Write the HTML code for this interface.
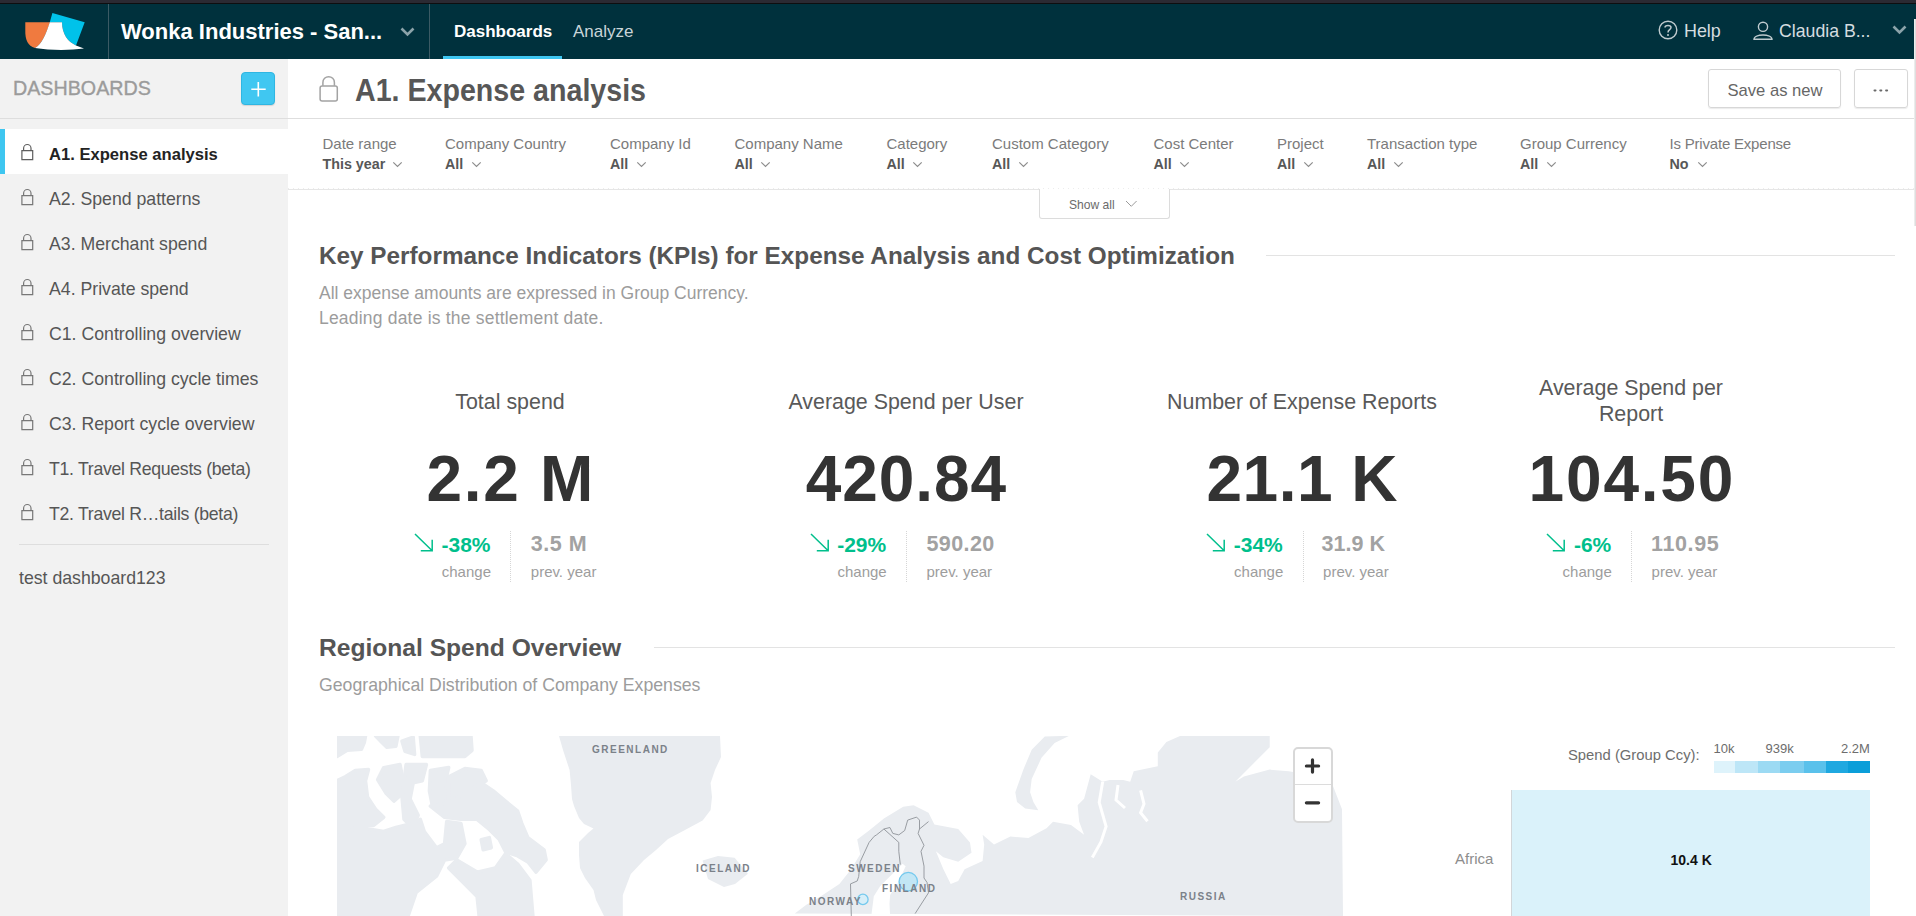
<!DOCTYPE html>
<html><head><meta charset="utf-8">
<style>
*{box-sizing:border-box;margin:0;padding:0}
html,body{width:1916px;height:916px;overflow:hidden;background:#fff;font-family:"Liberation Sans",sans-serif}
.a{position:absolute;white-space:nowrap;line-height:normal}
svg{position:absolute;overflow:visible}
#topstrip{position:absolute;left:0;top:0;width:1916px;height:3px;background:#2b2a33}
#topline{position:absolute;left:0;top:3px;width:1916px;height:1px;background:#0e0e10}
#hdr{position:absolute;left:0;top:4px;width:1916px;height:55px;background:#00313d}
.vdiv{position:absolute;top:4px;width:1px;height:55px;background:#3b5a64}
#sb{position:absolute;left:0;top:59px;width:288px;height:857px;background:#f2f2f2}
.hl{position:absolute;height:1px;background:#dedede}
.item{position:absolute;left:0;width:288px;height:45px}
.item .t{position:absolute;left:49px;top:14.8px;font-size:17.7px;color:#565656;white-space:nowrap}
.flt{position:absolute;top:135.4px}
.flt .l{font-size:15px;color:#7b7b7b;white-space:nowrap;line-height:17px;height:20.5px}
.flt .v{font-size:14.3px;font-weight:bold;color:#575757;white-space:nowrap;line-height:17px}
.kl{position:absolute;font-size:21.4px;color:#595959;white-space:nowrap;text-align:center}
.kn{position:absolute;font-size:64px;font-weight:bold;color:#333;white-space:nowrap;text-align:center;top:442px}
.kc{position:absolute;font-size:21px;font-weight:bold;color:#00bf8c;white-space:nowrap;top:532.7px;text-align:right}
.kp{position:absolute;font-size:21.5px;font-weight:bold;color:#a2a2a2;white-space:nowrap;top:531.6px}
.ks{position:absolute;font-size:15px;color:#9d9d9d;white-space:nowrap;top:563px}
.kd{position:absolute;top:531px;width:0;height:51px;border-left:1px dotted #d6d6d6}
.ml{position:absolute;font-size:10px;font-weight:bold;color:#7b8189;letter-spacing:1.5px;white-space:nowrap}
</style></head><body>
<div id="topstrip"></div><div id="topline"></div>
<div id="hdr"></div>
<!-- logo -->
<svg style="left:0;top:0" width="110" height="59" viewBox="0 0 110 59">
<path d="M52.4,13.1 L84.7,22.3 L76,45.4 C68,42 62,34 62,22.3 L49.8,22.3 Z" fill="#00c2ea"/>
<path d="M25.3,22.3 L50,22.3 C46,34 42,44 35,48 C28,46 25,40 25.3,30 Z" fill="#f07a3f"/>
<path d="M49.8,22.3 L62,22.3 C62,34 68,42 76,45.4 L84,48.5 C70,50.5 50,50.5 35,48 C42,44 46,34 49.8,22.3 Z" fill="#fff"/>
</svg>
<div class="vdiv" style="left:108px"></div>
<div class="vdiv" style="left:429px"></div>
<div class="a" style="left:121px;top:19.1px;font-size:22px;font-weight:bold;color:#fff">Wonka Industries - San...</div>
<svg style="left:400px;top:27px" width="16" height="10"><path d="M1.5,1.5 L7.5,7.5 L13.5,1.5" fill="none" stroke="#8ba3aa" stroke-width="2.6"/></svg>
<div class="a" style="left:454px;top:22.4px;font-size:17px;font-weight:bold;color:#fff">Dashboards</div>
<div class="a" style="left:443px;top:56px;width:119px;height:3px;background:#3ec6f1"></div>
<div class="a" style="left:573px;top:22.4px;font-size:17px;color:#c9d5d9">Analyze</div>
<svg style="left:1658px;top:20px" width="20" height="20"><circle cx="10" cy="10" r="8.8" fill="none" stroke="#bfcbcf" stroke-width="1.4"/><path d="M7,7.6 C7,4.8 13,4.8 13,7.6 C13,9.6 10,9.8 10,12.4" fill="none" stroke="#bfcbcf" stroke-width="1.5"/><circle cx="10" cy="15" r="1" fill="#bfcbcf"/></svg>
<div class="a" style="left:1684px;top:20.8px;font-size:17.9px;color:#d5dde0">Help</div>
<svg style="left:1753px;top:21px" width="20" height="20"><circle cx="10" cy="5.8" r="4.6" fill="none" stroke="#bfcbcf" stroke-width="1.4"/><path d="M1,18.3 C1,12.5 19,12.5 19,18.3 Z" fill="none" stroke="#bfcbcf" stroke-width="1.4"/></svg>
<div class="a" style="left:1779px;top:20.8px;font-size:17.7px;color:#d5dde0">Claudia B...</div>
<svg style="left:1892px;top:25px" width="16" height="10"><path d="M1.5,1.5 L7.5,7.5 L13.5,1.5" fill="none" stroke="#8ba3aa" stroke-width="2.6"/></svg>
<div class="a" style="left:1914px;top:19px;width:2px;height:40px;background:#fff"></div><div class="a" style="left:1914px;top:19px;width:2px;height:207px;background:linear-gradient(90deg,#ececec 50%,#dedede 50%)"></div>

<!-- sidebar -->
<div id="sb"></div>
<div class="a" style="left:13px;top:77.2px;font-size:19.7px;color:#9b9b9b;-webkit-text-stroke:0.35px #9b9b9b">DASHBOARDS</div>
<div class="a" style="left:241px;top:72px;width:34px;height:33px;background:#40c7f1;border:1px solid #2fb6e2;border-radius:4px;box-shadow:0 1px 1px rgba(0,0,0,.12)"></div>
<svg style="left:241px;top:72px" width="34" height="33"><path d="M10.3,17.3 H24.7 M17.3,10 V24.5" stroke="#fff" stroke-width="1.6"/></svg>
<div class="hl" style="left:0;top:118px;width:1914px"></div>

<div class="item" style="top:129px;background:#fff"><div style="position:absolute;left:0;top:0;width:5px;height:45px;background:#3ec6f0"></div><div class="t" style="font-weight:bold;color:#232323;font-size:16.6px;top:16px">A1. Expense analysis</div></div>
<div class="item" style="top:174px"><div class="t">A2. Spend patterns</div></div>
<div class="item" style="top:219px"><div class="t">A3. Merchant spend</div></div>
<div class="item" style="top:264px"><div class="t">A4. Private spend</div></div>
<div class="item" style="top:309px"><div class="t">C1. Controlling overview</div></div>
<div class="item" style="top:354px"><div class="t">C2. Controlling cycle times</div></div>
<div class="item" style="top:399px"><div class="t">C3. Report cycle overview</div></div>
<div class="item" style="top:444px"><div class="t" style="letter-spacing:-0.3px">T1. Travel Requests (beta)</div></div>
<div class="item" style="top:489px"><div class="t" style="letter-spacing:-0.3px">T2. Travel R…tails (beta)</div></div>
<svg style="left:0;top:129px" width="40" height="405">
<g fill="none" stroke="#5e5e5e" stroke-width="1.2">
<path id="lk" d="M23.6,21.6 V19.2 A3.7,3.7 0 0 1 31,19.2 V21.6 M21.9,21.6 H32.7 V30.6 H21.9 Z"/>
<use href="#lk" y="45" stroke="#777"/><use href="#lk" y="90" stroke="#777"/><use href="#lk" y="135" stroke="#777"/><use href="#lk" y="180" stroke="#777"/><use href="#lk" y="225" stroke="#777"/><use href="#lk" y="270" stroke="#777"/><use href="#lk" y="315" stroke="#777"/><use href="#lk" y="360" stroke="#777"/>
</g></svg>
<div class="hl" style="left:19px;top:544px;width:250px"></div>
<div class="a" style="left:19px;top:568px;font-size:17.7px;color:#565656">test dashboard123</div>

<!-- title bar -->
<svg style="left:318px;top:75px" width="22" height="28"><g fill="none" stroke="#a3a3a3" stroke-width="1.5"><path d="M4.9,10.8 V7.4 A5.75,5.75 0 0 1 16.4,7.4 V10.8"/><rect x="2.1" y="10.9" width="17.2" height="15.2" rx="2"/></g></svg>
<div class="a" style="left:355px;top:72.7px;font-size:30.5px;font-weight:bold;color:#575757;transform:scaleX(0.938);transform-origin:0 0">A1. Expense analysis</div>
<div class="a" style="left:1708px;top:69px;width:133px;height:39px;border:1px solid #d7d7d7;border-radius:3px;box-shadow:0 1px 1px rgba(0,0,0,.08)"></div>
<div class="a" style="left:1727.5px;top:80.5px;font-size:16.6px;color:#666">Save as new</div>
<div class="a" style="left:1854px;top:69px;width:54px;height:39px;border:1px solid #d7d7d7;border-radius:3px;box-shadow:0 1px 1px rgba(0,0,0,.08)"></div>
<svg style="left:1873px;top:89px" width="16" height="4"><rect x="0.5" y="0.4" width="3" height="2" rx="0.8" fill="#6a6a6a"/><rect x="6.3" y="0.4" width="3" height="2" rx="0.8" fill="#6a6a6a"/><rect x="12.1" y="0.4" width="3" height="2" rx="0.8" fill="#6a6a6a"/></svg>


<!-- filters -->
<div class="hl" style="left:288px;top:189px;width:1626px;background:#e6e6e6"></div><div class="a" style="left:288px;top:188px;width:1626px;height:1px;background:repeating-linear-gradient(90deg,#ececec 0 1px,transparent 1px 5px)"></div>
<div class="flt" style="left:322.5px"><div class="l">Date range</div><div class="v">This year</div></div>
<div class="flt" style="left:445px"><div class="l">Company Country</div><div class="v">All</div></div>
<div class="flt" style="left:610px"><div class="l">Company Id</div><div class="v">All</div></div>
<div class="flt" style="left:734.5px"><div class="l">Company Name</div><div class="v">All</div></div>
<div class="flt" style="left:886.5px"><div class="l">Category</div><div class="v">All</div></div>
<div class="flt" style="left:992px"><div class="l">Custom Category</div><div class="v">All</div></div>
<div class="flt" style="left:1153.5px"><div class="l">Cost Center</div><div class="v">All</div></div>
<div class="flt" style="left:1277px"><div class="l">Project</div><div class="v">All</div></div>
<div class="flt" style="left:1367px"><div class="l">Transaction type</div><div class="v">All</div></div>
<div class="flt" style="left:1520px"><div class="l">Group Currency</div><div class="v">All</div></div>
<div class="flt" style="left:1669.5px"><div class="l" style="letter-spacing:-0.2px">Is Private Expense</div><div class="v">No</div></div>
<svg style="left:0;top:160px" width="1916" height="10"><g fill="none" stroke="#8d8d8d" stroke-width="1.2">
<path id="ch" d="M393.3,2.3 L397.5,6.5 L401.7,2.3"/>
<use href="#ch" x="79"/><use href="#ch" x="244"/><use href="#ch" x="368"/><use href="#ch" x="520"/><use href="#ch" x="626"/><use href="#ch" x="787"/><use href="#ch" x="911"/><use href="#ch" x="1001"/><use href="#ch" x="1154"/><use href="#ch" x="1305"/>
</g></svg>
<div class="a" style="left:1038.5px;top:189px;width:131px;height:30px;background:#fff;border:1px solid #dcdcdc;border-top:none;border-radius:0 0 3px 3px"></div>
<div class="a" style="left:1069px;top:197.7px;font-size:12.1px;color:#6b6b6b">Show all</div>
<svg style="left:1125px;top:200px" width="14" height="8"><path d="M1,1 L6.3,6.3 L11.6,1" fill="none" stroke="#9a9a9a" stroke-width="1"/></svg>

<!-- KPI section -->
<div class="a" style="left:319px;top:242px;font-size:24.3px;font-weight:bold;color:#555">Key Performance Indicators (KPIs) for Expense Analysis and Cost Optimization</div>
<div class="hl" style="left:1266px;top:255px;width:629px;background:#e3e3e3"></div>
<div class="a" style="left:319px;top:283.2px;font-size:17.5px;color:#9c9c9c">All expense amounts are expressed in Group Currency.</div>
<div class="a" style="left:319px;top:308.2px;font-size:17.5px;color:#9c9c9c;letter-spacing:0.2px">Leading date is the settlement date.</div>

<div class="kl" style="left:310px;width:400px;top:389.6px">Total spend</div>
<div class="kn" style="left:310px;width:400px;letter-spacing:1.7px;text-indent:1.7px">2.2 M</div>
<div class="kl" style="left:706px;width:400px;top:389.6px">Average Spend per User</div>
<div class="kn" style="left:706px;width:400px;letter-spacing:0.9px;text-indent:0.9px">420.84</div>
<div class="kl" style="left:1102px;width:400px;top:389.6px">Number of Expense Reports</div>
<div class="kn" style="left:1102px;width:400px;letter-spacing:0.5px;text-indent:0.5px">21.1 K</div>
<div class="kl" style="left:1431px;width:400px;top:375.6px">Average Spend per</div>
<div class="kl" style="left:1431px;width:400px;top:401.8px">Report</div>
<div class="kn" style="left:1431px;width:400px;letter-spacing:1.8px;text-indent:1.8px">104.50</div>
<div class="kd" style="left:510px"></div>
<div class="kc" style="left:190.5px;width:300px"><svg style="position:relative;display:inline-block;vertical-align:-0.5px;margin-right:7.5px" width="20" height="19"><path d="M1,1 L18.2,17.8 M6.8,17.8 H18.2 V6.8" fill="none" stroke="#00bf8c" stroke-width="1.5"/></svg>-38%</div>
<div class="ks" style="left:190.5px;width:300.5px;text-align:right">change</div>
<div class="kp" style="left:530.8px;letter-spacing:0.5px">3.5 M</div>
<div class="ks" style="left:530.8px">prev. year</div>
<div class="kd" style="left:906.2px"></div>
<div class="kc" style="left:586.2px;width:300px"><svg style="position:relative;display:inline-block;vertical-align:-0.5px;margin-right:7.5px" width="20" height="19"><path d="M1,1 L18.2,17.8 M6.8,17.8 H18.2 V6.8" fill="none" stroke="#00bf8c" stroke-width="1.5"/></svg>-29%</div>
<div class="ks" style="left:586.2px;width:300.5px;text-align:right">change</div>
<div class="kp" style="left:926.5px;letter-spacing:0.4px">590.20</div>
<div class="ks" style="left:926.5px">prev. year</div>
<div class="kd" style="left:1302.8px"></div>
<div class="kc" style="left:982.8px;width:300px"><svg style="position:relative;display:inline-block;vertical-align:-0.5px;margin-right:7.5px" width="20" height="19"><path d="M1,1 L18.2,17.8 M6.8,17.8 H18.2 V6.8" fill="none" stroke="#00bf8c" stroke-width="1.5"/></svg>-34%</div>
<div class="ks" style="left:982.8px;width:300.5px;text-align:right">change</div>
<div class="kp" style="left:1321.6px">31.9 K</div>
<div class="ks" style="left:1323.1px">prev. year</div>
<div class="kd" style="left:1631.3px"></div>
<div class="kc" style="left:1311.3px;width:300px"><svg style="position:relative;display:inline-block;vertical-align:-0.5px;margin-right:7.5px" width="20" height="19"><path d="M1,1 L18.2,17.8 M6.8,17.8 H18.2 V6.8" fill="none" stroke="#00bf8c" stroke-width="1.5"/></svg>-6%</div>
<div class="ks" style="left:1311.3px;width:300.5px;text-align:right">change</div>
<div class="kp" style="left:1651.1px;letter-spacing:0.6px">110.95</div>
<div class="ks" style="left:1651.6px">prev. year</div>

<!-- Regional section -->
<div class="a" style="left:319px;top:633.7px;font-size:24.6px;font-weight:bold;color:#555">Regional Spend Overview</div>
<div class="hl" style="left:654px;top:647px;width:1241px;background:#e3e3e3"></div>
<div class="a" style="left:319px;top:674.8px;font-size:17.7px;color:#9c9c9c">Geographical Distribution of Company Expenses</div>

<div class="a" style="left:337px;top:736px;width:1006px;height:180px;overflow:hidden;background:#fff">
<svg style="left:-337px;top:-736px" width="1916" height="916">
<g fill="#e9ecf0" stroke="#e9ecf0" stroke-width="3.5" stroke-linejoin="round">
<polygon points="337.0,736.1 365.5,736.1 364.4,742.2 361.4,749.3 347.2,750.3 337.0,756.4"/>
<polygon points="375.6,736.1 397.9,736.1 395.9,746.2 386.8,747.3 381.7,742.2"/>
<polygon points="402.0,741.2 413.2,737.1 414.6,754.4 405.0,751.3"/>
<polygon points="420.3,736.1 471.0,736.1 472.0,750.3 464.9,756.4 422.3,756.4"/>
<polygon points="337.0,780.8 345.2,776.7 355.3,770.6 368.5,769.6 365.5,780.8 367.5,797.0 375.6,809.2 383.7,817.3 373.6,825.4 359.4,825.4 349.2,831.5 337.0,833.5"/>
<polygon points="377.6,779.7 383.7,767.6 400.0,764.5 402.0,774.7 401.0,795.0 393.9,801.1 385.8,792.9"/>
<polygon points="406.1,764.5 426.4,764.5 422.3,780.8 413.2,782.8 410.1,799.0 418.2,815.3 412.1,827.4 404.0,819.3 402.0,797.0"/>
<polygon points="430.4,770.6 448.7,767.6 445.6,780.8 446.7,801.1 440.6,808.2 432.4,806.1 429.4,790.9"/>
<polygon points="448.7,776.7 464.9,768.6 481.2,770.6 486.2,780.8 469.0,790.9 456.8,797.0 448.7,801.1"/>
<polygon points="430.4,806.1 448.7,803.1 469.0,790.9 481.2,782.8 493.3,790.9 505.5,801.1 517.7,811.2 521.8,823.4 527.9,837.6 544.1,849.8 546.1,859.9 536.0,872.1 527.9,862.0 517.7,855.9 505.5,851.8 499.4,839.6 489.3,829.5 477.1,819.3 460.9,819.3 444.6,817.3"/>
<polygon points="337.0,835.6 359.4,827.4 383.7,831.5 395.9,827.4 412.1,823.4 420.3,819.3 424.3,831.5 436.5,847.7 444.6,843.7 446.7,821.4 460.9,823.4 464.9,843.7 456.8,857.9 444.6,859.9 436.5,876.2 416.2,892.4 408.1,916.0 337.0,916.0"/>
<polygon points="477.1,872.1 495.4,868.0 505.5,853.8 517.7,864.0 529.9,880.2 532.9,916.0 479.1,916.0 477.1,896.5 464.9,884.3 448.7,868.0 456.8,859.9"/>
<polygon points="481.2,839.6 489.3,837.6 491.3,847.7 483.2,849.8"/>
</g>
<g fill="#e9ecf0">
<polygon points="559,736 720,736 721,757 715,770 710.6,783 712,797 710.6,810 702.6,820.5 685,830 668,839 656,850 644,860 630.8,874 622.8,895 622.8,916 604,916 596,900 593.5,890 585,878 580,868 579,855 579,842 588,833 593.5,828.5 584,824 579,818 574,806 572,799 571,785 569.6,770 563,750"/>
<polygon points="702.6,860.4 718,856 734.6,857.8 747.9,873.7 735,884 724,887 708,879"/>
<polygon points="794.8,913.6 806,905 821.6,895.8 839.4,883.9 851.3,869.1 860.2,854.2 857.2,839.4 869.1,830.5 883.9,818.6 903.2,806.7 913.6,805.2 928.5,812.7 934.4,824.5 958.2,829 970,842.4 971.5,852.7 958.2,861.7 943.3,857.2 935.9,851.3 943.3,869.1 950.7,883.9 958.2,881 964.6,869.2 982.6,861 984.2,844.6 982.6,834.8 994,844.6 1010.4,836.5 1028.4,838.1 1046.5,828.3 1053,821.7 1071,825 1084.1,834.8 1079.2,821.7 1077.6,805.3 1084.1,798.8 1090.7,774.2 1102.7,781.7 1109.6,780 1123.3,780 1130.2,781.7 1133.7,771.3 1157.8,766.2 1157.8,752.4 1166.4,742 1180,736 1269.7,736 1269.7,747.2 1235.3,781.7 1243.9,776.5 1269.7,769.6 1288.7,771.3 1330,778.2 1342,809.2 1343,916"/>
<polygon points="1069.4,735.7 1044.8,736.6 1031.7,749.7 1023.5,769.3 1015.3,792.2 1017,802.1 1025.2,808.6 1038.3,810.2 1033.4,802.1 1030.1,792.2 1031.7,779.1 1041.5,757.8 1054.6,743.1"/>
</g>
<polygon fill="#fff" points="871.3,916 873.8,896.3 880.1,886.3 888.8,877.5 900.1,866.3 902.6,863.8 905.7,866.3 898.9,880.7 896.4,886.3 890.1,895.1 889.5,903.8 890.1,916"/>
<g fill="none" stroke="#fff" stroke-width="3"><polyline points="1102.7,781.7 1099.2,802.3 1106.1,826.5 1101,842 1092.3,857.5"/><polyline points="1140.6,790.3 1144,804 1140.6,812.7 1147.5,821.3"/><polyline points="1118,785 1116,800 1125,808"/></g>
<g fill="none" stroke="#8f9399" stroke-width="0.9">
<polyline points="851.3,916 850.5,883.9 857.2,881 858.7,876.5 860.2,861.7 869.1,842.4 874.2,836.3 876.5,834.9 883.9,829 889.9,827.5 892.8,833.4 898.8,834.9 904.7,830.5 907.7,820.1 916.6,817.1 919.5,820.1 919.5,829 928.5,821.6"/>
<polyline points="919.5,829 918.1,833.4 924,845.3 921,851.3 924,866.1 924,878 927,882.4 928.5,892.8 915.1,913.6"/>
<polyline points="883.9,829 898.8,842.4 898.8,851.3 900.3,864.6"/>
</g>
<circle cx="908.3" cy="881.6" r="9.2" fill="#c2e6f5" stroke="#74c9ee" stroke-width="1.3"/>
<circle cx="862.9" cy="899.4" r="5.2" fill="#d6eef8" stroke="#74c9ee" stroke-width="1.3"/>
</svg>
<div class="ml" style="left:255px;top:8px">GREENLAND</div>
<div class="ml" style="left:359px;top:127px">ICELAND</div>
<div class="ml" style="left:511px;top:127px">SWEDEN</div>
<div class="ml" style="left:545px;top:147px">FINLAND</div>
<div class="ml" style="left:472px;top:160px">NORWAY</div>
<div class="ml" style="left:843px;top:155px">RUSSIA</div>
<div class="a" style="left:955.5px;top:10.5px;width:40.5px;height:76px;background:#fff;border:2px solid #d8d8d8;border-radius:5px"></div>
<div class="a" style="left:957.5px;top:48px;width:36.5px;height:1px;background:#dcdcdc"></div>
<svg style="left:956px;top:11px" width="39" height="76"><path d="M13.4,19 H25.6 M19.5,12.9 V25.1 M13.4,55.8 H25.6" stroke="#333" stroke-width="3.2" stroke-linecap="round"/></svg>
</div>

<!-- legend / treemap -->
<div class="a" style="left:1568px;top:746.5px;font-size:14.8px;color:#6d6d6d">Spend (Group Ccy):</div>
<div class="a" style="left:1713.5px;top:740.5px;font-size:13px;color:#6d6d6d">10k</div>
<div class="a" style="left:1765.5px;top:740.5px;font-size:13px;color:#6d6d6d">939k</div>
<div class="a" style="left:1841px;top:740.5px;font-size:13px;color:#6d6d6d">2.2M</div>
<div class="a" style="left:1714px;top:761px;width:156px;height:12px;display:flex">
<div style="width:21px;background:#def3fb"></div><div style="width:23px;background:#bde6f7"></div><div style="width:22px;background:#9cdaf3"></div><div style="width:23.5px;background:#7bcdef"></div><div style="width:22px;background:#5ac1eb"></div><div style="width:22.5px;background:#1fa8e0"></div><div style="width:22px;background:#0a9ed9"></div>
</div>
<div class="a" style="left:1511px;top:790px;width:359px;height:126px;background:#daf2fa"></div>
<div class="a" style="left:1511px;top:790px;width:1px;height:126px;background:#d2d6d9"></div>
<div class="a" style="left:1455px;top:850px;font-size:15px;color:#8d8d8d">Africa</div>
<div class="a" style="left:1670.5px;top:852px;font-size:14px;font-weight:bold;color:#111">10.4 K</div>

</body></html>
